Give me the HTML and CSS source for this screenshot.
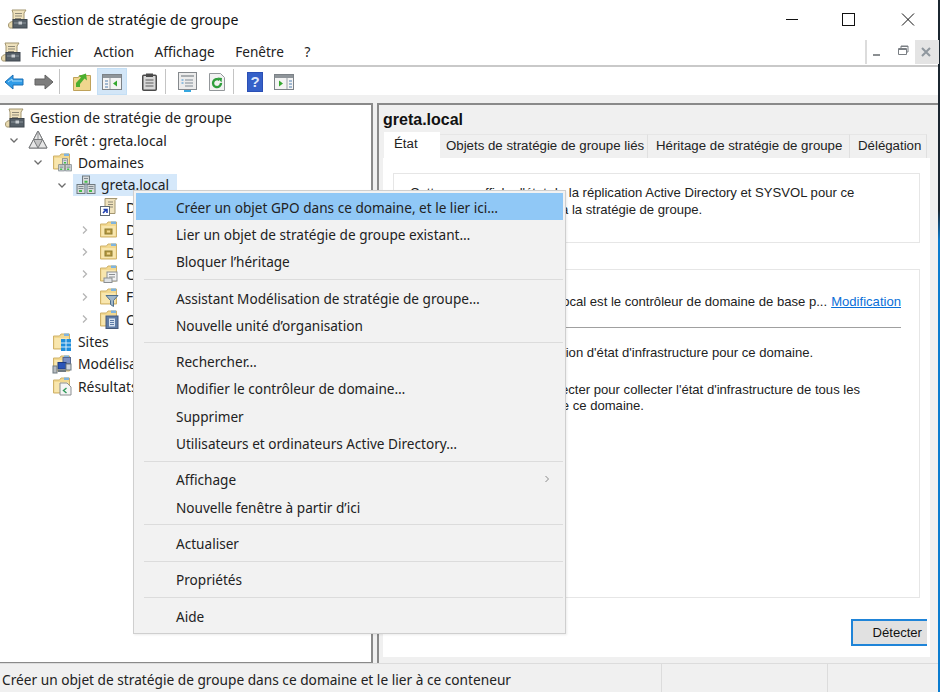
FILE: index.html
```html
<!DOCTYPE html>
<html lang="fr">
<head>
    <meta charset="UTF-8">
    <title>Gestion de stratégie de groupe</title>
    <link rel="stylesheet" href="styles.css">
</head>
<body>

<svg class="defs" width="0" height="0">
    <defs>
        <symbol id="scroll" viewBox="0 0 20 20">
            <path d="M4 1h14l-2 3v9H5V4z" fill="#efe2bd" stroke="#a39670"/>
            <path d="M7 4.500h7M7 7h7M7 9.500h6" stroke="#8f8a78"/>
            <path d="M.5 16c0-2 2-3.500 4.500-3.500V19H2c-1 0-1.500-1.500-1.500-3z" fill="#e8d9ae" stroke="#a39670"/>
            <rect x="5" y="10.500" width="14" height="8.500" fill="#555f67" stroke="#3f474e"/>
            <path d="M6 14h12" stroke="#8c959c"/>
            <rect x="10.500" y="12.500" width="3.500" height="3" fill="#c9ced2"/>
        </symbol>
        <symbol id="forest" viewBox="0 0 20 20">
            <path d="M10 1 19 18H1z" fill="#c4c4c4" stroke="#77797b"/>
            <path d="M10 1 14.500 9.500h-9zM5.500 9.500 10 18 1 18zM14.500 9.500 19 18h-9z" fill="#e6e6e6" stroke="#77797b"/>
            <path d="M10 1v8" stroke="#8d8f91"/>
        </symbol>
        <symbol id="folder" viewBox="0 0 20 20">
            <path d="M1.500 4h6l1.500-2h8.500v15h-16z" fill="#f2d88f" stroke="#cfb26a"/>
            <path d="M2.500 6h14v10h-14z" fill="#f8e6ae"/>
            <rect x="12" y="1.500" width="5" height="2.500" fill="#7fb4df"/>
        </symbol>
        <symbol id="servers" viewBox="0 0 20 20">
            <rect x="6.500" y="1" width="7" height="8" fill="#d6dadc" stroke="#6f7a80"/>
            <rect x="1" y="9.500" width="8" height="9" fill="#d6dadc" stroke="#6f7a80"/>
            <rect x="11" y="9.500" width="8" height="9" fill="#d6dadc" stroke="#6f7a80"/>
            <path d="M8 3.500h4M2.500 11.500h5M12.500 11.500h5M2.500 13.500h5M12.500 13.500h5" stroke="#7f8a90"/>
            <path d="M8.500 6.800h3M3 16h3M13 16h3" stroke="#43c04a" stroke-width="2"/>
        </symbol>
        <symbol id="shortcut" viewBox="0 0 20 20">
            <path d="M6 1.500h12l-2 2v13H6z" fill="#efe2bd" stroke="#a39670"/>
            <path d="M9 5h5M9 7.500h5M9 10h5" stroke="#8f8a78"/>
            <rect x="1.500" y="9.500" width="9" height="9" fill="#fff" stroke="#5f6a75"/>
            <path d="M4 16l3-3M4.500 12.500H8V16" fill="none" stroke="#1f3fb0" stroke-width="1.600"/>
        </symbol>
        <symbol id="ou" viewBox="0 0 20 20">
            <use href="#folder"/>
            <rect x="6" y="9" width="7" height="5" fill="#b79a45" stroke="#8c7a2e"/>
            <rect x="8" y="10.500" width="3" height="2" fill="#f2d88f"/>
        </symbol>
        <symbol id="gpos" viewBox="0 0 20 20">
            <use href="#folder"/>
            <rect x="8" y="8" width="10" height="9" fill="#f1f1f1" stroke="#8b8f92"/>
            <path d="M10 10.500h6M10 13h6" stroke="#8b8f92"/>
            <rect x="5" y="14" width="8" height="4.500" fill="#dfe2e4" stroke="#8b8f92"/>
        </symbol>
        <symbol id="funnel" viewBox="0 0 20 20">
            <use href="#folder"/>
            <path d="M7 8.500h12l-4.500 5v6l-3-2v-4z" fill="#9fb6c9" stroke="#4f6f8c"/>
        </symbol>
        <symbol id="starter" viewBox="0 0 20 20">
            <use href="#folder"/>
            <rect x="7" y="7" width="12" height="12.500" fill="#5f7ca6" stroke="#46597a"/>
            <rect x="10" y="9.500" width="6" height="8" fill="#d7e2ef"/>
            <path d="M11 11.500h4M11 13.500h4M11 15.500h4" stroke="#5f7ca6"/>
        </symbol>
        <symbol id="sites" viewBox="0 0 20 20">
            <use href="#folder"/>
            <rect x="9" y="7" width="10" height="12" fill="#1f8edb"/>
            <path d="M14 7v12M9 11h10M9 15h10" stroke="#d6ecfa"/>
        </symbol>
        <symbol id="modeling" viewBox="0 0 20 20">
            <use href="#folder"/>
            <rect x="11" y="3.500" width="7.500" height="6" fill="#7c91c4" stroke="#55688f"/>
            <rect x="6" y="8.500" width="8" height="6.500" fill="#2a55b8" stroke="#1c3a80"/>
            <rect x="14" y="10" width="5" height="6" fill="#cfd5dc" stroke="#6f7a80"/>
            <rect x="1" y="12" width="4" height="7" fill="#b8bcc0" stroke="#6f7a80"/>
            <path d="M6 17h8" stroke="#6f7a80" stroke-width="2"/>
        </symbol>
        <symbol id="results" viewBox="0 0 20 20">
            <use href="#folder"/>
            <path d="M8 7h7l4 4v8H8z" fill="#f5f5f5" stroke="#8b8f92"/>
            <path d="M14.500 12l-3 2.500 3 2.500" fill="none" stroke="#2f9a5a" stroke-width="1.400"/>
        </symbol>
        <symbol id="chev-down" viewBox="0 0 10 10">
            <path d="M1.500 3.500 5 7l3.500-3.500" fill="none" stroke="#6d6d6d" stroke-width="1.300"/>
        </symbol>
        <symbol id="chev-right" viewBox="0 0 10 10">
            <path d="M3 1.500 6.500 5 3 8.500" fill="none" stroke="#b5b5b5" stroke-width="1.300"/>
        </symbol>
    </defs>
</svg>

<div class="window">

    <div class="titlebar">
        <svg class="title-icon"><use href="#scroll"/></svg>
        <span class="title-text">Gestion de stratégie de groupe</span>
        <div class="caption">
            <svg width="46" height="38"><path d="M13 19.500h12" stroke="#111"/></svg>
            <svg width="59" height="38"><rect x="23.500" y="13.500" width="12" height="12" fill="none" stroke="#111"/></svg>
            <svg width="59" height="38"><path d="M24 13.500l12 12M36 13.500l-12 12" stroke="#111"/></svg>
        </div>
    </div>

    <div class="menubar">
        <svg class="menu-icon"><use href="#scroll"/></svg>
        <span class="menu-item">Fichier</span>
        <span class="menu-item">Action</span>
        <span class="menu-item">Affichage</span>
        <span class="menu-item">Fenêtre</span>
        <span class="menu-item">?</span>
        <div class="mdi">
            <svg width="24" height="24"><path d="M6 15h7" stroke="#8b8f92" stroke-width="2"/></svg>
            <svg width="24" height="24"><path d="M7.500 8.500h8v6h-8zM10 8V6h7v6h-1" fill="none" stroke="#7a7f84"/><path d="M7.500 9.500h8M10 6.500h7" stroke="#7a7f84"/></svg>
            <svg class="mdi-close" width="24" height="24"><path d="M7 8l8 8M15 8l-8 8" stroke="#8f979e" stroke-width="2"/></svg>
        </div>
    </div>

    <div class="toolbar">
        <span class="tool tool-back">
            <svg width="20" height="18" viewBox="0 0 20 18"><path d="M1 9l8-7v4h10v6H9v4z" fill="#2f9ce8" stroke="#1a6fb5"/><path d="M4 9l4-3v2h10" fill="none" stroke="#a5d8f7"/></svg>
        </span>
        <span class="tool">
            <svg width="20" height="18" viewBox="0 0 20 18"><path d="M19 9l-8-7v4H1v6h10v4z" fill="#7d7d7d" stroke="#626262"/></svg>
        </span>
        <span class="tool-sep first-sep"></span>
        <span class="tool">
            <svg width="18" height="19" viewBox="0 0 18 19"><path d="M.500 5.500h5l1-2h11v15H.500z" fill="#f0d68e" stroke="#bfa25a"/><path d="M3 11 8 5.500 5.500 4 13 1.500l1 7-2.500-2L7 12v3H3z" fill="#4caf2f"/></svg>
        </span>
        <span class="tool tool-on">
            <svg width="20" height="18" viewBox="0 0 20 18"><rect x=".5" y="1.500" width="19" height="15" fill="#f4f4f4" stroke="#7c8287"/><rect x="1" y="2" width="18" height="3" fill="#8f959a"/><path d="M8 5v11" stroke="#9ba1a6"/><path d="M3 8h3M3 11h3M3 14h3" stroke="#4f7fb0"/><path d="M15 7.500v6L11 10.500z" fill="#35a82f"/></svg>
        </span>
        <span class="tool tool-gap">
            <svg width="15" height="18" viewBox="0 0 15 18"><rect x=".75" y="2.250" width="13.500" height="15" rx="1" fill="#d8d8d8" stroke="#4a4a4a" stroke-width="1.500"/><rect x="4" y=".5" width="7" height="3.500" fill="#4a4a4a"/><path d="M3.500 7h8M3.500 10h8M3.500 13h8" stroke="#5c5c5c"/></svg>
        </span>
        <span class="tool-sep"></span>
        <span class="tool">
            <svg width="19" height="20" viewBox="0 0 19 20"><rect x=".5" y=".5" width="18" height="17" fill="#ececec" stroke="#85898d"/><rect x="3" y="3" width="13" height="2" fill="#a9adb0"/><path d="M7 8h8M7 11h8M7 14h8" stroke="#7f8a94"/><path d="M3.500 8h2M3.500 11h2" stroke="#3b8ed0"/><path d="M6 19h7" stroke="#35a7e0" stroke-width="2"/></svg>
        </span>
        <span class="tool">
            <svg width="16" height="18" viewBox="0 0 16 18"><path d="M.500.5h11l4 4v13H.500z" fill="#f2f2f2" stroke="#93979a"/><path d="M12 10a4 4 0 1 1-1.500-3" fill="none" stroke="#2f9e3c" stroke-width="2.400"/><path d="M8.500 4.500l4.500.5-.5 4.500z" fill="#2f9e3c"/></svg>
        </span>
        <span class="tool-sep"></span>
        <span class="tool tool-help">
            <svg width="16" height="20" viewBox="0 0 16 20"><rect width="16" height="20" fill="#2a4fb5"/><rect x="1" y="1" width="14" height="18" fill="#3560c8"/><text class="help-mark" x="8" y="15" text-anchor="middle">?</text></svg>
        </span>
        <span class="tool">
            <svg width="20" height="18" viewBox="0 0 20 18"><rect x=".5" y="1.500" width="19" height="15" fill="#f4f4f4" stroke="#7c8287"/><rect x="1" y="2" width="18" height="3" fill="#8f959a"/><path d="M13 5v11" stroke="#9ba1a6"/><path d="M15 8h3M15 11h3M15 14h3" stroke="#4f7fb0"/><path d="M5 7.500v6l4-3z" fill="#35a82f"/></svg>
        </span>
    </div>

    <div class="panes">
        <div class="tree">
            <div class="row root">
                <svg class="icon"><use href="#scroll"/></svg>
                <span>Gestion de stratégie de groupe</span>
            </div>
            <div class="row lvl1">
                <svg class="chev"><use href="#chev-down"/></svg>
                <svg class="icon"><use href="#forest"/></svg>
                <span>Forêt : greta.local</span>
            </div>
            <div class="row lvl2">
                <svg class="chev"><use href="#chev-down"/></svg>
                <svg class="icon"><use href="#folder"/><use href="#servers" x="6" y="6" width="14" height="14"/></svg>
                <span>Domaines</span>
            </div>
            <div class="row lvl3">
                <svg class="chev"><use href="#chev-down"/></svg>
                <div class="selected">
                    <svg class="icon"><use href="#servers"/></svg>
                    <span>greta.local</span>
                </div>
            </div>
            <div class="row lvl4">
                <span class="chev"></span>
                <svg class="icon"><use href="#shortcut"/></svg>
                <span>Default Domain Policy</span>
            </div>
            <div class="row lvl4">
                <svg class="chev"><use href="#chev-right"/></svg>
                <svg class="icon"><use href="#ou"/></svg>
                <span>Domain Controllers</span>
            </div>
            <div class="row lvl4">
                <svg class="chev"><use href="#chev-right"/></svg>
                <svg class="icon"><use href="#ou"/></svg>
                <span>Direction</span>
            </div>
            <div class="row lvl4">
                <svg class="chev"><use href="#chev-right"/></svg>
                <svg class="icon"><use href="#gpos"/></svg>
                <span>Objets de stratégie de groupe</span>
            </div>
            <div class="row lvl4">
                <svg class="chev"><use href="#chev-right"/></svg>
                <svg class="icon"><use href="#funnel"/></svg>
                <span>Filtres WMI</span>
            </div>
            <div class="row lvl4">
                <svg class="chev"><use href="#chev-right"/></svg>
                <svg class="icon"><use href="#starter"/></svg>
                <span>Objets GPO Starter</span>
            </div>
            <div class="row lvl2">
                <span class="chev"></span>
                <svg class="icon"><use href="#sites"/></svg>
                <span>Sites</span>
            </div>
            <div class="row lvl2">
                <span class="chev"></span>
                <svg class="icon"><use href="#modeling"/></svg>
                <span>Modélisation de stratégie de groupe</span>
            </div>
            <div class="row lvl2">
                <span class="chev"></span>
                <svg class="icon"><use href="#results"/></svg>
                <span>Résultats de stratégie de groupe</span>
            </div>
        </div>

        <div class="detail">
            <h1>greta.local</h1>
            <div class="tabs">
                <span class="tab tab-active">État</span>
                <span class="tab tab-gpo">Objets de stratégie de groupe liés</span>
                <span class="tab tab-inherit">Héritage de stratégie de groupe</span>
                <span class="tab tab-deleg">Délégation</span>
            </div>
            <div class="tab-body">
                <div class="box box-intro">
                    <p>Cette page affiche l'état de la réplication Active Directory et SYSVOL pour ce</p>
                    <p>domaine, tel qu'il est relié à la stratégie de groupe.</p>
                </div>
                <div class="box box-status">
                    <div class="status-line">
                        <span>DC01.greta.local est le contrôleur de domaine de base p...</span>
                        <a href="#">Modification</a>
                    </div>
                    <div class="rule"></div>
                    <p class="no-info">Il n'existe aucune information d'état d'infrastructure pour ce domaine.</p>
                    <p>Cliquez sur le bouton Détecter pour collecter l'état d'infrastructure de tous les</p>
                    <p>contrôleurs de domaine de ce domaine.</p>
                </div>
                <div class="actions">
                    <button class="detect">Détecter</button>
                </div>
            </div>
        </div>
    </div>

    <div class="statusbar">
        <span class="status-main">Créer un objet de stratégie de groupe dans ce domaine et le lier à ce conteneur</span>
        <span class="status-cell"></span>
        <span class="status-cell last"></span>
    </div>
</div>

<div class="context-menu">
    <div class="cm-item cm-hover">Créer un objet GPO dans ce domaine, et le lier ici…</div>
    <div class="cm-item">Lier un objet de stratégie de groupe existant…</div>
    <div class="cm-item">Bloquer l’héritage</div>
    <div class="cm-sep"></div>
    <div class="cm-item">Assistant Modélisation de stratégie de groupe…</div>
    <div class="cm-item">Nouvelle unité d’organisation</div>
    <div class="cm-sep"></div>
    <div class="cm-item">Rechercher…</div>
    <div class="cm-item">Modifier le contrôleur de domaine…</div>
    <div class="cm-item">Supprimer</div>
    <div class="cm-item">Utilisateurs et ordinateurs Active Directory…</div>
    <div class="cm-sep"></div>
    <div class="cm-item cm-sub">Affichage<svg width="6" height="8" viewBox="0 0 6 8"><path d="M1.500 1 4.500 4l-3 3" fill="none" stroke="#8a8a8a"/></svg></div>
    <div class="cm-item">Nouvelle fenêtre à partir d’ici</div>
    <div class="cm-sep"></div>
    <div class="cm-item">Actualiser</div>
    <div class="cm-sep"></div>
    <div class="cm-item">Propriétés</div>
    <div class="cm-sep"></div>
    <div class="cm-item">Aide</div>
</div>

</body>
</html>
```

FILE: styles.css
```css
/* page */
body {
    margin: 0;
    width: 940px;
    height: 692px;
    overflow: hidden;
    position: relative;
    background: linear-gradient(#1b2630 210px, #0a7ccf 240px);
    font-family: "Noto Sans", sans-serif;
    font-size: 13.6px;
    color: #222;
}

.defs {
    position: absolute;
}

svg {
    display: block;
    flex: none;
}

.window {
    width: 938px;
    height: 692px;
    display: flex;
    flex-direction: column;
    background-color: #f0f0f0;
}

/* title bar */
.titlebar {
    height: 38px;
    display: flex;
    align-items: center;
    background-color: #fff;
    padding-left: 8px;
}

.title-icon {
    width: 20px;
    height: 20px;
    margin-right: 5px;
}

.title-text {
    font-size: 14.1px;
    color: #111;
}

.caption {
    margin-left: auto;
    display: flex;
    margin-right: 1px;
}

/* menu bar */
.menubar {
    height: 29px;
    display: flex;
    align-items: center;
    background-color: #fff;
    border-bottom: 2px solid #c9c9c9;
    box-sizing: border-box;
    padding-left: 1px;
    position: relative;
}

.menu-icon {
    width: 20px;
    height: 20px;
    margin-right: 10px;
}

.menu-item {
    margin-right: 20.5px;
}

.mdi {
    position: absolute;
    right: 0;
    top: 2px;
    height: 24px;
    width: 73px;
    display: flex;
    border-left: 2px solid #dcdcdc;
    box-sizing: border-box;
    justify-content: space-between;
}

.mdi-close {
    background-color: #e4e4e4;
}

/* toolbar */
.toolbar {
    height: 28px;
    display: flex;
    align-items: flex-end;
    background-color: #fff;
    flex: none;
}

.tool {
    width: 30px;
    height: 27px;
    display: flex;
    align-items: center;
    justify-content: center;
    box-sizing: border-box;
}

.tool-back {
    margin-left: -1px;
}

.tool-on {
    background-color: #d3e6f7;
    border: 1px solid #c4dff5;
}

.tool-gap {
    margin-left: 7px;
}

.tool-help {
    width: 29px;
}

.tool-sep {
    width: 1px;
    height: 25px;
    align-self: center;
    background-color: #c4c4c4;
    margin: 0 6px 0 1px;
}

.first-sep {
    margin: 0 7px 0 0;
}

.help-mark {
    font-family: "Liberation Sans", sans-serif;
    font-size: 15px;
    font-weight: bold;
    fill: #dfe7fb;
}

/* panes */
.panes {
    flex: 1;
    display: flex;
    padding-top: 8px;
    min-height: 0;
}

.tree {
    width: 373px;
    box-sizing: border-box;
    background-color: #fff;
    border-top: 2px solid #8a8a8a;
    border-right: 2px solid #8a8a8a;
    border-bottom: 1px solid #8a8a8a;
    padding-top: 1.5px;
    font-size: 13.85px;
}

.row {
    height: 22.4px;
    display: flex;
    align-items: center;
    white-space: nowrap;
    padding-left: 5px;
}

.row .icon {
    width: 20px;
    height: 20px;
    margin-right: 6px;
}

.row.root .icon,
.selected .icon {
    margin-right: 5px;
}

.chev {
    width: 10px;
    height: 10px;
    margin-right: 9px;
    flex: none;
}

.lvl1 {
    padding-left: 9px;
}

.lvl2 {
    padding-left: 33px;
}

.lvl3 {
    padding-left: 57px;
}

.lvl4 {
    padding-left: 80px;
}

.lvl4 .icon {
    margin-right: 7px;
}

.lvl3 .chev {
    margin-right: 6px;
}

.selected {
    display: flex;
    align-items: center;
    background-color: #d5e8fa;
    height: 22px;
    width: 104px;
    padding-left: 3px;
    box-sizing: border-box;
}

/* right side */
.detail {
    flex: 1;
    margin-left: 4px;
    border-top: 2px solid #8a8a8a;
    border-left: 2px solid #8a8a8a;
    font-family: "Liberation Sans", sans-serif;
    font-size: 13.1px;
    color: #222;
    display: flex;
    flex-direction: column;
    min-width: 0;
    padding-bottom: 6px;
    box-sizing: border-box;
}

h1 {
    margin: 5px 0 0 4px;
    font-size: 16px;
    line-height: 20px;
    color: #111;
}

.tabs {
    display: flex;
    align-items: flex-end;
    margin: 2px 0 0 5px;
    height: 26px;
    flex: none;
    font-size: 13.25px;
}

.tab {
    height: 24px;
    line-height: 22px;
    box-sizing: border-box;
    border-top: 1px solid #e6e6e6;
    border-right: 1px solid #e0e0e0;
    white-space: nowrap;
}

.tab-active {
    height: 26px;
    width: 56px;
    padding-left: 10px;
    background-color: #fff;
    border: 0;
    line-height: 24px;
}

.tab-gpo {
    width: 208px;
    padding-left: 6px;
}

.tab-inherit {
    width: 202px;
    padding-left: 8px;
}

.tab-deleg {
    width: 77px;
    padding-left: 8px;
}

.tab-body {
    flex: 1;
    background-color: #fff;
    margin: 0 8px 0 4px;
    padding: 15px 10px 0 10px;
    display: flex;
    flex-direction: column;
}

.box {
    border: 1px solid #e6e6e6;
    box-sizing: border-box;
}

.box p {
    margin: 0;
    line-height: 17px;
}

.box-intro {
    height: 70px;
    padding: 10px 0 0 16px;
}

.box-status {
    height: 329px;
    margin-top: 26px;
    padding: 23px 0 0 20px;
}

.box-status p {
    line-height: 16px;
}

.status-line {
    display: flex;
    justify-content: flex-end;
    gap: 4px;
    width: 487px;
    line-height: 17px;
    white-space: nowrap;
}

a {
    color: #0a6fd8;
}

.rule {
    height: 1px;
    background-color: #a0a0a0;
    width: 487px;
    margin: 17px 0 17px;
}

.box .no-info {
    margin-bottom: 21px;
}

.actions {
    display: flex;
    justify-content: flex-end;
    margin: 21px -7px 0 0;
}

.detect {
    width: 76px;
    height: 27px;
    font: inherit;
    color: #111;
    background-color: #e1e1e1;
    border: 2px solid #1f84d8;
    border-right: 0;
    text-align: right;
    padding: 0 5px 0 0;
}

/* status bar */
.statusbar {
    height: 29px;
    display: flex;
    border-top: 1px solid #dcdcdc;
    box-sizing: border-box;
    flex: none;
    font-size: 13.7px;
    line-height: 31px;
    padding-left: 2px;
    overflow: hidden;
}

.status-main {
    width: 659px;
    flex: none;
    border-right: 1px solid #dcdcdc;
    white-space: nowrap;
}

.status-cell {
    width: 165px;
    flex: none;
    border-right: 1px solid #dcdcdc;
}

.status-cell.last {
    flex: 1;
    border-right: 0;
}

/* context menu */
.context-menu {
    position: absolute;
    left: 133px;
    top: 190px;
    width: 433px;
    height: 444px;
    box-sizing: border-box;
    background-color: #f2f2f2;
    border: 1px solid #cfcfcf;
    padding: 2px;
    box-shadow: 1px 1px 2px rgba(0, 0, 0, 0.08);
}

.cm-item {
    height: 27.3px;
    box-sizing: border-box;
    padding: 1px 0 0 40px;
    color: #222;
    display: flex;
    align-items: center;
    justify-content: space-between;
}

.cm-hover {
    background-color: #90c8f6;
}

.cm-sub svg {
    margin: -2px 13px 0 0;
}

.cm-sep {
    height: 1px;
    margin: 4px 0 4px 8px;
    background-color: #dcdcdc;
}
```
